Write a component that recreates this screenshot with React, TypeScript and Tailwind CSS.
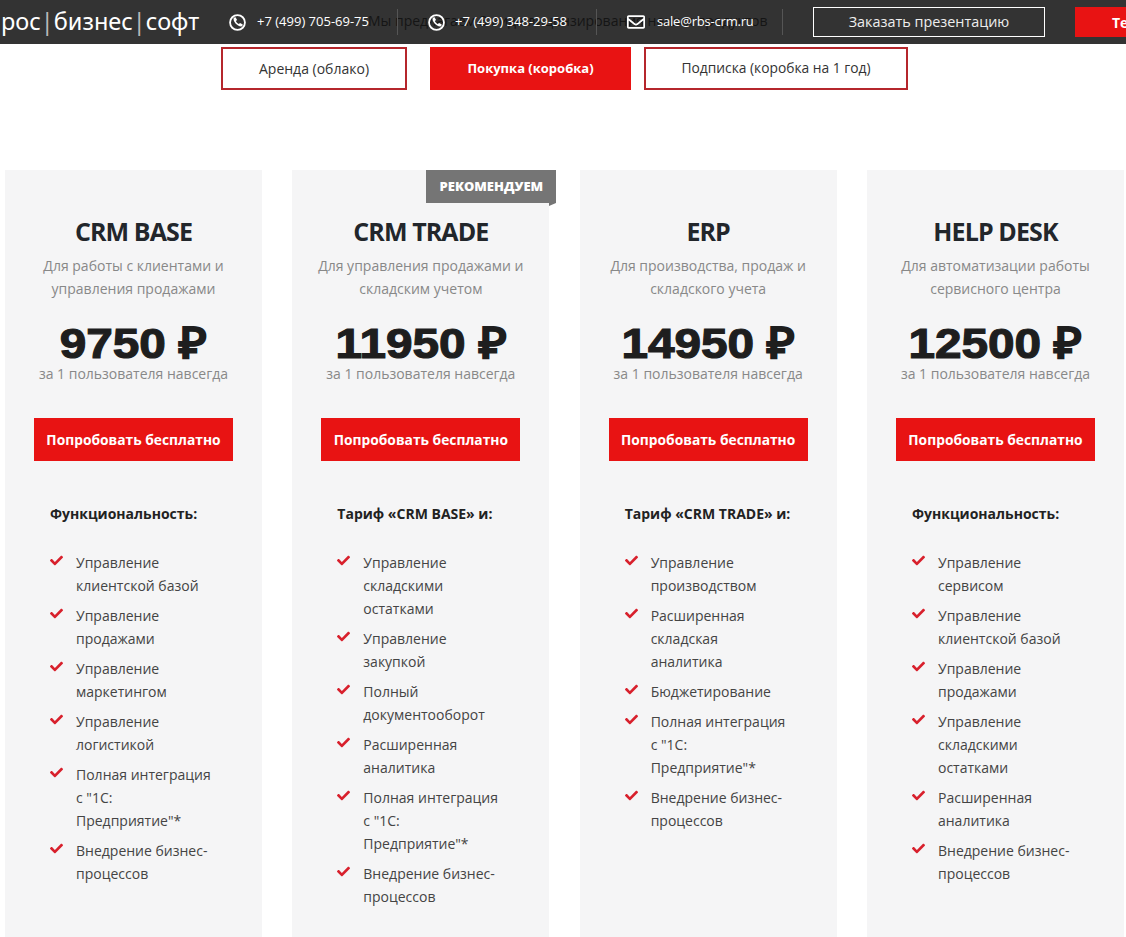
import React from 'react';
import { FaCheck, FaRegEnvelope } from 'react-icons/fa';

type Plan = {
  name: string;
  desc: string[];
  price: string;
  heading: string;
  features: string[][];
  recommended?: boolean;
};

const plans: Plan[] = [
  {
    name: 'CRM BASE',
    desc: ['Для работы с клиентами и', 'управления продажами'],
    price: '9750 ₽',
    heading: 'Функциональность:',
    features: [
      ['Управление', 'клиентской базой'],
      ['Управление', 'продажами'],
      ['Управление', 'маркетингом'],
      ['Управление', 'логистикой'],
      ['Полная интеграция', 'с "1С:', 'Предприятие"*'],
      ['Внедрение бизнес-', 'процессов'],
    ],
  },
  {
    name: 'CRM TRADE',
    desc: ['Для управления продажами и', 'складским учетом'],
    price: '11950 ₽',
    heading: 'Тариф «CRM BASE» и:',
    recommended: true,
    features: [
      ['Управление', 'складскими', 'остатками'],
      ['Управление', 'закупкой'],
      ['Полный', 'документооборот'],
      ['Расширенная', 'аналитика'],
      ['Полная интеграция', 'с "1С:', 'Предприятие"*'],
      ['Внедрение бизнес-', 'процессов'],
    ],
  },
  {
    name: 'ERP',
    desc: ['Для производства, продаж и', 'складского учета'],
    price: '14950 ₽',
    heading: 'Тариф «CRM TRADE» и:',
    features: [
      ['Управление', 'производством'],
      ['Расширенная', 'складская', 'аналитика'],
      ['Бюджетирование'],
      ['Полная интеграция', 'с "1С:', 'Предприятие"*'],
      ['Внедрение бизнес-', 'процессов'],
    ],
  },
  {
    name: 'HELP DESK',
    desc: ['Для автоматизации работы', 'сервисного центра'],
    price: '12500 ₽',
    heading: 'Функциональность:',
    features: [
      ['Управление', 'сервисом'],
      ['Управление', 'клиентской базой'],
      ['Управление', 'продажами'],
      ['Управление', 'складскими', 'остатками'],
      ['Расширенная', 'аналитика'],
      ['Внедрение бизнес-', 'процессов'],
    ],
  },
];

const PhoneIcon = () => (
  <svg viewBox="0 0 16 16" className="h-[17px] w-[17px] shrink-0" fill="none">
    <circle cx="8" cy="8" r="7" stroke="#fff" strokeWidth="1.7" />
    <path d="M4.4 3.6 L6.2 3 L7.6 5.6 L6.5 6.7 C6.9 8 8 9.1 9.3 9.5 L10.4 8.4 L13 9.8 L12.4 11.6 C8.6 12.6 3.4 7.4 4.4 3.6 Z" fill="#fff" />
  </svg>
);

const Card: React.FC<{ plan: Plan }> = ({ plan }) => (
  <div className="relative h-[800px] bg-[#f5f5f6] font-['Open_Sans',sans-serif]">
    {plan.recommended && (
      <div className="absolute -right-[7px] top-0 flex h-[33px] w-[130px] items-center justify-center bg-[#757575] text-[13px] font-extrabold text-white">
        РЕКОМЕНДУЕМ
        <span className="absolute -bottom-[3px] right-0 h-0 w-0 border-r-[7px] border-t-[3px] border-r-transparent border-t-[#757575]" />
      </div>
    )}
    <h2 className="pt-[43px] text-center text-[25px] font-bold leading-[36px] tracking-[-0.9px] text-[#22262b]">{plan.name}</h2>
    <p className="mt-[5px] text-center text-[14px] leading-[23px] text-[#888]">
      {plan.desc[0]}
      <br />
      {plan.desc[1]}
    </p>
    <div className="mt-[20px] text-center">
      <span className="inline-block scale-x-[1.11] font-['Liberation_Sans',sans-serif] text-[43px] font-bold leading-[47px] text-[#1e1e1e] [-webkit-text-stroke:1.2px_#1e1e1e]">
        {plan.price}
      </span>
    </div>
    <p className="text-center text-[14px] leading-[14px] text-[#888]">за 1 пользователя навсегда</p>
    <div className="mt-[37px] flex justify-center">
      <button className="h-[43px] w-[199px] bg-[#e81313] pt-px text-[13.8px] font-bold text-white">Попробовать бесплатно</button>
    </div>
    <div className="mt-[43px] pl-[45px] text-[14px] font-bold leading-[20px] text-[#222]">{plan.heading}</div>
    <ul className="mt-[27px] flex flex-col gap-[7px] pl-[45px]">
      {plan.features.map((lines, i) => (
        <li key={i} className="flex text-[14px] leading-[23px] text-[#444]">
          <FaCheck className="mt-[3px] h-[13px] w-[13px] shrink-0 text-[#d8202c]" />
          <span className="ml-[13px]">
            {lines.map((line, j) => (
              <span key={j} className="block whitespace-nowrap">
                {line}
              </span>
            ))}
          </span>
        </li>
      ))}
    </ul>
  </div>
);

export default function App() {
  return (
    <div className="relative h-[937px] w-[1126px] overflow-hidden bg-white font-['Open_Sans',sans-serif]">
      {/* Top bar */}
      <header className="relative flex h-[44px] items-center bg-[#333333] text-white">
        <span className="absolute left-[368px] top-[11px] whitespace-nowrap text-[14px] leading-[20px] text-[#151515]">
          Мы предлагаем 3 вида лицензирования наших продуктов
        </span>
        <div className="relative ml-[1px] w-[228px] shrink-0 whitespace-nowrap font-['Noto_Sans',sans-serif] text-[23.5px]">
          рос<span className="text-[#bbb]">|</span>бизнес<span className="text-[#bbb]">|</span>софт
        </div>
        <div className="relative flex shrink-0 items-center">
          <PhoneIcon />
          <span className="ml-[11px] w-[140px] whitespace-nowrap text-[13px]">+7 (499) 705-69-75</span>
          <span className="h-[26px] w-px bg-[#555]" />
        </div>
        <div className="relative ml-[30px] flex shrink-0 items-center">
          <PhoneIcon />
          <span className="ml-[10px] w-[141px] whitespace-nowrap text-[13px]">+7 (499) 348-29-58</span>
          <span className="h-[26px] w-px bg-[#555]" />
        </div>
        <div className="relative ml-[30px] flex shrink-0 items-center">
          <FaRegEnvelope className="h-[18px] w-[18px]" />
          <span className="ml-[12px] w-[125px] whitespace-nowrap text-[13px] tracking-[-0.2px]">sale@rbs-crm.ru</span>
          <span className="h-[26px] w-px bg-[#555]" />
        </div>
        <button className="relative ml-[30px] h-[30px] w-[232px] shrink-0 border border-white text-[14.4px] text-[#eee]">Заказать презентацию</button>
        <button className="relative ml-[30px] h-[30px] w-[120px] shrink-0 bg-[#e81313] pl-[37px] text-left text-[14px] font-bold">Тест</button>
      </header>

      {/* Licence tabs */}
      <div className="mt-[3px] flex pl-[221px]">
        <button className="h-[43px] w-[186px] border-2 border-[#b5262c] text-[14px] text-[#333]">Аренда (облако)</button>
        <button className="ml-[23px] h-[43px] w-[201px] bg-[#e81313] text-[13px] font-bold text-white">Покупка (коробка)</button>
        <button className="ml-[13px] h-[43px] w-[264px] border-2 border-[#b5262c] text-[13.8px] text-[#333]">Подписка (коробка на 1 год)</button>
      </div>

      {/* Plans */}
      <div className="mt-[80px] grid grid-cols-[repeat(4,257px)] gap-x-[30.33px] pl-[5px]">
        {plans.map((plan) => (
          <Card key={plan.name} plan={plan} />
        ))}
      </div>
    </div>
  );
}
